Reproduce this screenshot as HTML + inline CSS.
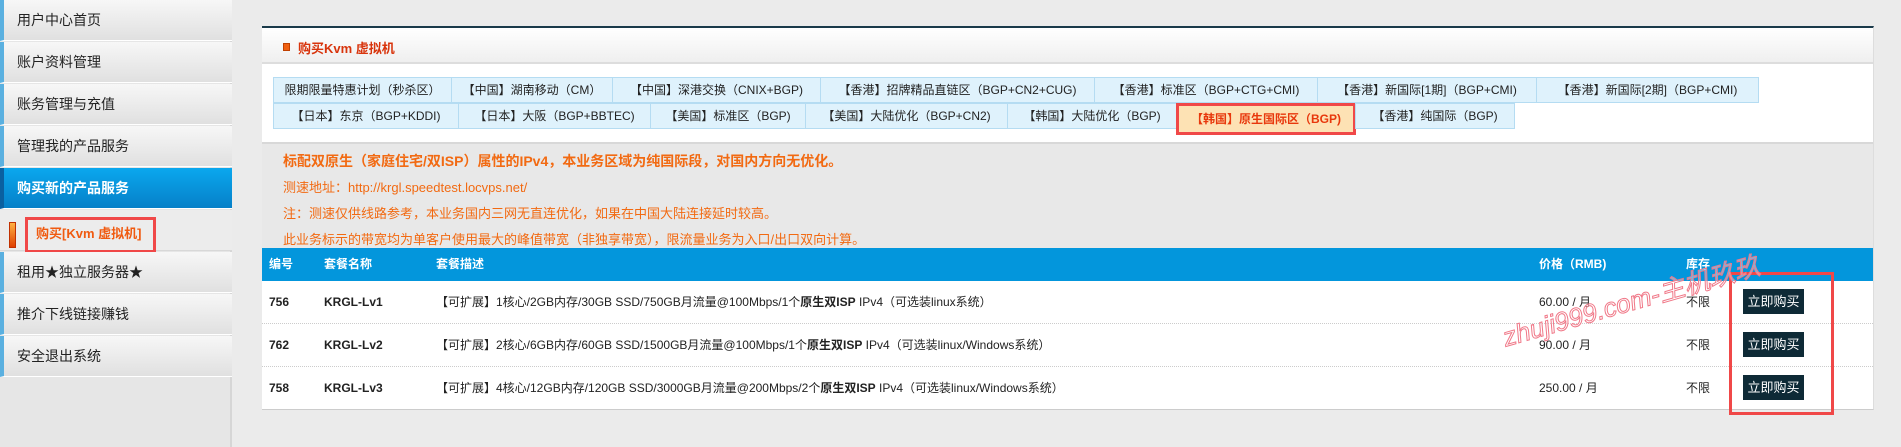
<!DOCTYPE html>
<html><head><meta charset="utf-8"><style>
*{margin:0;padding:0;box-sizing:border-box}
body{width:1901px;height:447px;overflow:hidden;background:#ebebeb;font-family:"Liberation Sans","Noto Sans CJK SC",sans-serif;position:relative}
.side{position:absolute;left:0;top:0;width:232px;height:447px;background:#e6e6e6;border-right:2px solid #d6d6d6}
.it{position:absolute;left:0;width:232px;height:41px;background:linear-gradient(#f7f7f7,#e0e0e0);border-left:4px solid #5ab0e0;border-bottom:1px solid #fff;font-size:14px;color:#222;line-height:41px;padding-left:13px}
.it.act{background:linear-gradient(#0aa8ee,#0680c8);color:#fff;font-weight:bold;border-left-color:#0a60a0}
.panel{position:absolute;left:262px;top:26px;width:1612px;height:384px;background:#fff;border-top:2px solid #1a3a4a;border-right:1px solid #ddd;border-bottom:1px solid #ccc}
.hd{height:36px;background:linear-gradient(#fff,#efefef);border-bottom:2px solid #ddd;position:relative}
.hd b{position:absolute;left:36px;top:10px;font-size:13px;color:#d8340c}
.hd i{position:absolute;left:21px;top:15px;width:7px;height:8px;background:#f06010;border:1px solid #c04000}
.tab{position:absolute;height:26px;background:#dff2fc;border:1px solid #b5dcf2;font-size:12px;color:#222;text-align:center;line-height:24px;white-space:nowrap}
.note{position:absolute;left:0;top:114px;width:1611px;height:106px;background:#e8e8e8;border-top:2px solid #d8d8d8}
.note div{position:absolute;left:21px;color:#f26a12;font-size:13px;white-space:nowrap}
.th{position:absolute;left:0;top:220px;width:1611px;height:33px;background:#0396dc;color:#fff;font-weight:bold;font-size:12px}
.th span,.row span{position:absolute;top:0;line-height:33px;white-space:nowrap}
.row{position:absolute;left:0;width:1611px;height:43px;border-bottom:1px dotted #ccc;font-size:12px;color:#222}
.row span{line-height:43px}
.btn{position:absolute;left:1481px;top:8px;width:61px;height:25px;background:#0e2a36;color:#fff;font-size:13px;text-align:center;line-height:25px}
</style></head><body>
<div class="side">
<div class="it" style="top:0">用户中心首页</div>
<div class="it" style="top:42px">账户资料管理</div>
<div class="it" style="top:84px">账务管理与充值</div>
<div class="it" style="top:126px">管理我的产品服务</div>
<div class="it act" style="top:168px">购买新的产品服务</div>
<div style="position:absolute;left:0;top:210px;width:232px;height:41px;background:#ececec;border-bottom:1px solid #d8d8d8"></div>
<div style="position:absolute;left:9px;top:222px;width:7px;height:26px;background:linear-gradient(#ffb040,#e04000);border:1px solid #c03000"></div>
<div style="position:absolute;left:25px;top:217px;width:131px;height:36px;border:3px solid #f04848"></div>
<div style="position:absolute;left:36px;top:223px;font-size:13px;font-weight:bold;color:#f05a10">购买[Kvm 虚拟机]</div>
<div class="it" style="top:252px">租用★独立服务器★</div>
<div class="it" style="top:294px">推介下线链接赚钱</div>
<div class="it" style="top:336px">安全退出系统</div>
</div>
<div class="panel">
<div class="hd"><i></i><b>购买Kvm 虚拟机</b></div>
<div class="tab" style="left:11px;top:49px;width:179px">限期限量特惠计划（秒杀区）</div>
<div class="tab" style="left:189px;top:49px;width:162px">【中国】湖南移动（CM）</div>
<div class="tab" style="left:350px;top:49px;width:209px">【中国】深港交换（CNIX+BGP)</div>
<div class="tab" style="left:558px;top:49px;width:275px">【香港】招牌精品直链区（BGP+CN2+CUG)</div>
<div class="tab" style="left:832px;top:49px;width:224px">【香港】标准区（BGP+CTG+CMI)</div>
<div class="tab" style="left:1055px;top:49px;width:220px">【香港】新国际[1期]（BGP+CMI)</div>
<div class="tab" style="left:1274px;top:49px;width:223px">【香港】新国际[2期]（BGP+CMI)</div>
<div class="tab" style="left:11px;top:75px;width:186px">【日本】东京（BGP+KDDI)</div>
<div class="tab" style="left:196px;top:75px;width:193px">【日本】大阪（BGP+BBTEC)</div>
<div class="tab" style="left:388px;top:75px;width:156px">【美国】标准区（BGP)</div>
<div class="tab" style="left:543px;top:75px;width:203px">【美国】大陆优化（BGP+CN2)</div>
<div class="tab" style="left:745px;top:75px;width:170px">【韩国】大陆优化（BGP)</div>
<div class="tab" style="left:914px;top:75px;width:180px;background:#fde2b4;color:#e8380c;font-weight:bold;border:3px solid #f04848;height:32px;line-height:26px">【韩国】原生国际区（BGP)</div>
<div class="tab" style="left:1093px;top:75px;width:160px">【香港】纯国际（BGP)</div>
<div class="note">
<div style="top:7px;font-size:14px;font-weight:bold">标配双原生（家庭住宅/双ISP）属性的IPv4，本业务区域为纯国际段，对国内方向无优化。</div>
<div style="top:33px">测速地址：http://krgl.speedtest.locvps.net/</div>
<div style="top:59px">注：测速仅供线路参考，本业务国内三网无直连优化，如果在中国大陆连接延时较高。</div>
<div style="top:85px">此业务标示的带宽均为单客户使用最大的峰值带宽（非独享带宽），限流量业务为入口/出口双向计算。</div>
</div>
<div class="th"><span style="left:7px">编号</span><span style="left:62px">套餐名称</span><span style="left:174px">套餐描述</span><span style="left:1277px">价格（RMB)</span><span style="left:1424px">库存</span></div>
<div class="row" style="top:253px"><span style="left:7px;font-weight:bold">756</span><span style="left:62px;font-weight:bold">KRGL-Lv1</span><span style="left:174px">【可扩展】1核心/2GB内存/30GB SSD/750GB月流量@100Mbps/1个<b>原生双ISP</b> IPv4（可选装linux系统）</span><span style="left:1277px">60.00 / 月</span><span style="left:1424px">不限</span><div class="btn">立即购买</div></div>
<div class="row" style="top:296px"><span style="left:7px;font-weight:bold">762</span><span style="left:62px;font-weight:bold">KRGL-Lv2</span><span style="left:174px">【可扩展】2核心/6GB内存/60GB SSD/1500GB月流量@100Mbps/1个<b>原生双ISP</b> IPv4（可选装linux/Windows系统）</span><span style="left:1277px">90.00 / 月</span><span style="left:1424px">不限</span><div class="btn">立即购买</div></div>
<div class="row" style="top:339px"><span style="left:7px;font-weight:bold">758</span><span style="left:62px;font-weight:bold">KRGL-Lv3</span><span style="left:174px">【可扩展】4核心/12GB内存/120GB SSD/3000GB月流量@200Mbps/2个<b>原生双ISP</b> IPv4（可选装linux/Windows系统）</span><span style="left:1277px">250.00 / 月</span><span style="left:1424px">不限</span><div class="btn">立即购买</div></div>
</div>
<div style="position:absolute;left:1729px;top:272px;width:105px;height:143px;border:3px solid #f04848"></div>
<div style="position:absolute;left:1503px;top:318px;font-size:26px;color:rgba(255,255,255,.4);-webkit-text-stroke:1px #f07888;transform:rotate(-16deg);transform-origin:left center;white-space:nowrap;font-style:italic">zhuji999.com-主机玖玖</div>
</body></html>
